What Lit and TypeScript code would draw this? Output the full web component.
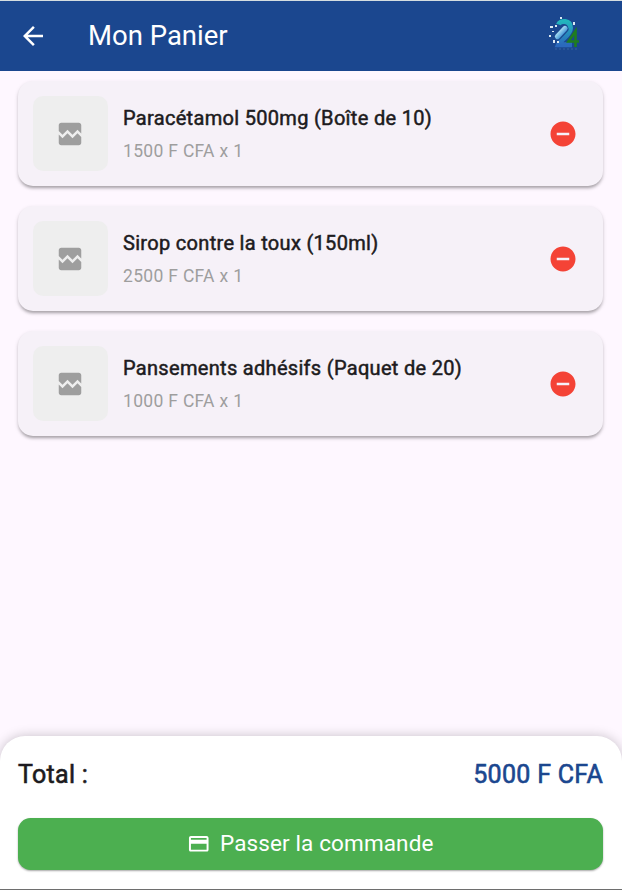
import { LitElement, html, css, svg } from "lit";
import { customElement } from "lit/decorators.js";

interface CartItem {
  name: string;
  price: number;
  quantity: number;
}

const items: CartItem[] = [
  { name: "Paracétamol 500mg (Boîte de 10)", price: 1500, quantity: 1 },
  { name: "Sirop contre la toux (150ml)", price: 2500, quantity: 1 },
  { name: "Pansements adhésifs (Paquet de 20)", price: 1000, quantity: 1 },
];

const paths = {
  back: "M20 11H7.83l5.59-5.59L12 4l-8 8 8 8 1.41-1.41L7.83 13H20v-2z",
  broken:
    "M21 5v6.59l-3-3.01-4 4.01-4-4-4 4-3-3.01V5c0-1.1.9-2 2-2h14c1.1 0 2 .9 2 2zm-3 6.42l3 3.01V19c0 1.1-.9 2-2 2H5c-1.1 0-2-.9-2-2v-6.58l3 2.99 4-4 4 4 4-3.99z",
  remove: "M12 2C6.48 2 2 6.48 2 12s4.48 10 10 10 10-4.48 10-10S17.52 2 12 2zm5 11H7v-2h10v2z",
  card: "M20 4H4c-1.11 0-1.99.89-1.99 2L2 18c0 1.11.89 2 2 2h16c1.11 0 2-.89 2-2V6c0-1.11-.89-2-2-2zm0 14H4v-6h16v6zm0-10H4V6h16v2z",
};

const icon = (d: string) => html`<svg class="icon" viewBox="0 0 24 24">${svg`<path d=${d} />`}</svg>`;

@customElement("app-root")
export class AppRoot extends LitElement {
  static styles = css`
    :host {
      display: flex;
      flex-direction: column;
      box-sizing: border-box;
      height: 890px;
      overflow: hidden;
      background: #fef7ff;
      border-top: 1px solid #d5dde0;
      border-bottom: 1px solid #6e6e6e;
      font-family: Roboto, sans-serif;
      color: #1d1b20;
    }
    .icon {
      display: block;
      width: 30px;
      height: 30px;
      fill: currentColor;
      flex: none;
    }
    header {
      display: flex;
      align-items: center;
      height: 70px;
      flex: none;
      box-sizing: border-box;
      padding: 0 40px 0 18px;
      background: #1b478f;
      color: #fff;
    }
    h1 {
      flex: 1;
      margin: 0 0 2px 40px;
      font-size: 27.5px;
      font-weight: 400;
      line-height: 35px;
    }
    .logo {
      width: 34px;
      height: 34px;
      margin-bottom: 4px;
    }
    main {
      flex: 1;
      display: flex;
      flex-direction: column;
      gap: 20px;
      padding: 10px 19px 0 18px;
    }
    .card {
      display: flex;
      align-items: center;
      height: 105px;
      box-sizing: border-box;
      padding: 15px 25px 15px 15px;
      border-radius: 15px;
      background: #f6f1f8;
      box-shadow: 0 2.5px 3px -1px rgba(0, 0, 0, 0.24), 0 2px 4px rgba(0, 0, 0, 0.15);
    }
    .thumb {
      display: grid;
      place-items: center;
      width: 75px;
      height: 75px;
      border-radius: 10px;
      background: #eee;
      color: #9e9e9e;
    }
    .thumb .icon {
      margin-right: 0.3px;
    }
    .info {
      flex: 1;
      margin-left: 15px;
    }
    .name {
      margin-top: -1px;
      font-size: 20px;
      line-height: 30px;
      -webkit-text-stroke: 0.5px currentColor;
      letter-spacing: 0.31px;
    }
    .price {
      margin-top: 6px;
      font-size: 17.5px;
      line-height: 25px;
      letter-spacing: 0.31px;
      color: #9e9e9e;
    }
    .remove {
      color: #f44336;
    }
    footer {
      flex: none;
      height: 153px;
      box-sizing: border-box;
      padding: 20px 19px 0 18px;
      border-radius: 25px 25px 0 0;
      background: #fff;
      box-shadow: 0 0 12px rgba(0, 0, 0, 0.22);
    }
    .total {
      display: flex;
      justify-content: space-between;
      font-size: 25px;
      line-height: 37px;
      letter-spacing: 0.3px;
      -webkit-text-stroke: 0.6px currentColor;
    }
    .amount {
      color: #1b478f;
    }
    button {
      display: flex;
      align-items: center;
      justify-content: center;
      gap: 9px;
      width: 100%;
      height: 52.5px;
      margin: 24.5px 0 0;
      padding: 0 0 1px;
      border: 0;
      border-radius: 12.5px;
      background: #4caf50;
      color: #fff;
      font: 400 22.5px/30px Roboto, sans-serif;
      letter-spacing: 0.125px;
      box-shadow: 0 1px 2px rgba(0, 0, 0, 0.35);
    }
    button .icon {
      width: 23.5px;
      height: 23.5px;
    }
  `;

  private logo() {
    return html`<svg class="logo" viewBox="0 0 34 34">
      <defs>
        <linearGradient id="g" x1="0" y1="0" x2="0" y2="1">
          <stop offset="0" stop-color="#22b5bd" />
          <stop offset="1" stop-color="#2b69bd" />
        </linearGradient>
        <linearGradient id="c" x1="0" y1="0" x2="1" y2="1">
          <stop offset="0.2" stop-color="#b5e4f6" />
          <stop offset="0.8" stop-color="#3c93d6" />
        </linearGradient>
      </defs>
      <path fill="none" stroke="url(#g)" stroke-width="5" d="M10.500 7.500C12 3 22.500 3 22.500 11C22.500 18 13 22 10.500 27.800H24" />
      <path fill="none" stroke="#1f7d20" stroke-width="2.600" d="M27.500 30V14L20.500 24.500H31" />
      <path stroke="#1c4b91" stroke-width="7" stroke-linecap="round" d="M10 19.500L17 12" />
      <path stroke="url(#c)" stroke-width="5.200" stroke-linecap="round" d="M9.500 19.500L17 11.500" />
      <path fill="#dce9f3" d="M2 9h3v2H2zM7 8h2v2H7zM12 0h2v2h-2zM1 18h2v2H1zM5 23h2v3H5zM9 24h2v2H9zM25 5h2v3h-2zM4 14h2v1H4z" />
      <path fill="none" stroke="#39629f" stroke-dasharray="2 2" d="M7 32H29" />
    </svg>`;
  }

  render() {
    const total = items.reduce((sum, i) => sum + i.price * i.quantity, 0);
    return html`
      <header>
        ${icon(paths.back)}
        <h1>Mon Panier</h1>
        ${this.logo()}
      </header>
      <main>
        ${items.map(
          (i) => html`<div class="card">
            <div class="thumb">${icon(paths.broken)}</div>
            <div class="info">
              <div class="name">${i.name}</div>
              <div class="price">${i.price} F CFA x ${i.quantity}</div>
            </div>
            <div class="remove">${icon(paths.remove)}</div>
          </div>`
        )}
      </main>
      <footer>
        <div class="total"><span>Total :</span><span class="amount">${total} F CFA</span></div>
        <button>${icon(paths.card)}<span>Passer la commande</span></button>
      </footer>
    `;
  }
}
